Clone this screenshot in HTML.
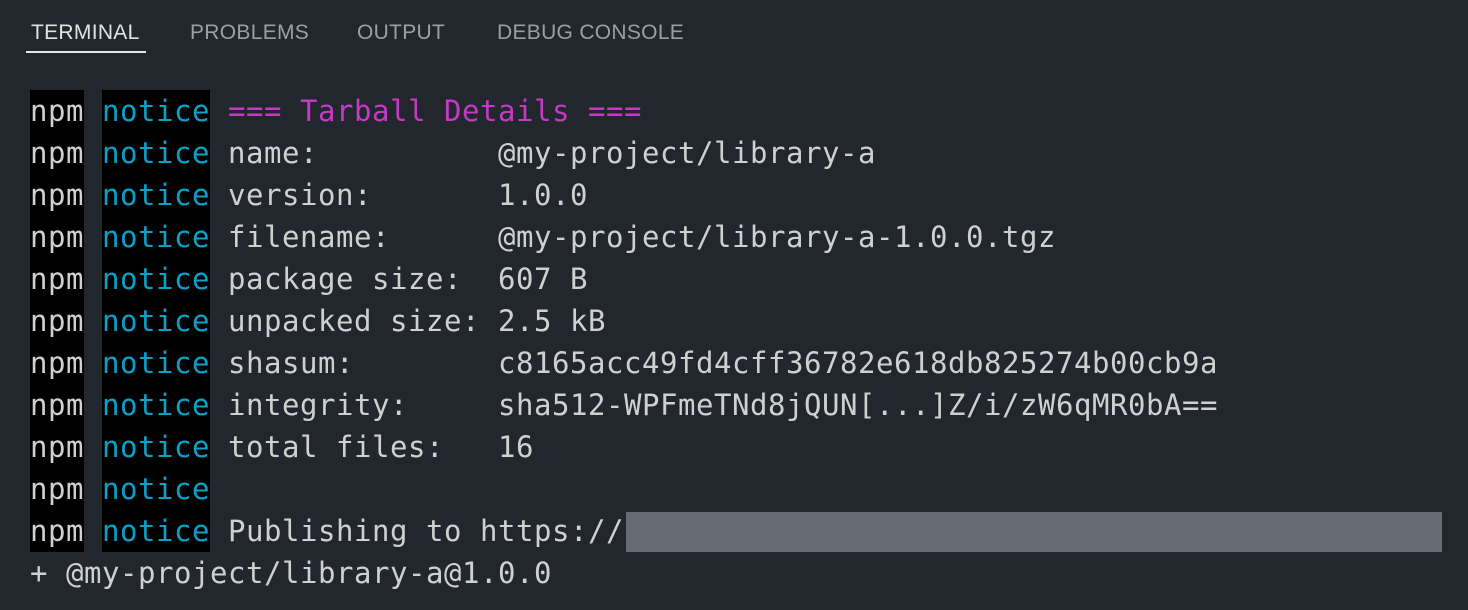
<!DOCTYPE html>
<html><head><style>
html,body{margin:0;padding:0;background:#22262d;width:1468px;height:610px;overflow:hidden}
.tab{position:absolute;top:21px;font-family:"Liberation Sans",sans-serif;font-size:21px;letter-spacing:0.3px;color:#9b9fa6}
.ul{position:absolute;left:26px;top:51px;width:120px;height:2px;background:#e6e6e6}
.t{position:absolute;left:30px;font-family:"DejaVu Sans Mono",monospace;font-size:29px;letter-spacing:0.54px;line-height:42px;height:42px;color:#d0d0d0;white-space:pre}
.b{background:#000;display:inline-block;height:42px}
.c{color:#0aa0c8}
.m{color:#c43ac4}
.red{position:absolute;left:626px;top:512px;width:816px;height:40px;background:#666b76}
</style></head><body>
<div class="tab" style="left:31px;color:#e2e2e2">TERMINAL</div>
<div class="tab" style="left:190px">PROBLEMS</div>
<div class="tab" style="left:357px">OUTPUT</div>
<div class="tab" style="left:497px">DEBUG CONSOLE</div>
<div class="ul"></div>
<div class="t" style="top:90px"><span class="b">npm</span> <span class="b c">notice</span> <span class="m">=== Tarball Details ===</span></div>
<div class="t" style="top:132px"><span class="b">npm</span> <span class="b c">notice</span> name:          @my-project/library-a</div>
<div class="t" style="top:174px"><span class="b">npm</span> <span class="b c">notice</span> version:       1.0.0</div>
<div class="t" style="top:216px"><span class="b">npm</span> <span class="b c">notice</span> filename:      @my-project/library-a-1.0.0.tgz</div>
<div class="t" style="top:258px"><span class="b">npm</span> <span class="b c">notice</span> package size:  607 B</div>
<div class="t" style="top:300px"><span class="b">npm</span> <span class="b c">notice</span> unpacked size: 2.5 kB</div>
<div class="t" style="top:342px"><span class="b">npm</span> <span class="b c">notice</span> shasum:        c8165acc49fd4cff36782e618db825274b00cb9a</div>
<div class="t" style="top:384px"><span class="b">npm</span> <span class="b c">notice</span> integrity:     sha512-WPFmeTNd8jQUN[...]Z/i/zW6qMR0bA==</div>
<div class="t" style="top:426px"><span class="b">npm</span> <span class="b c">notice</span> total files:   16</div>
<div class="t" style="top:468px"><span class="b">npm</span> <span class="b c">notice</span></div>
<div class="t" style="top:510px"><span class="b">npm</span> <span class="b c">notice</span> Publishing to https://</div>
<div class="red"></div>
<div class="t" style="top:552px">+ @my-project/library-a@1.0.0</div>
</body></html>
